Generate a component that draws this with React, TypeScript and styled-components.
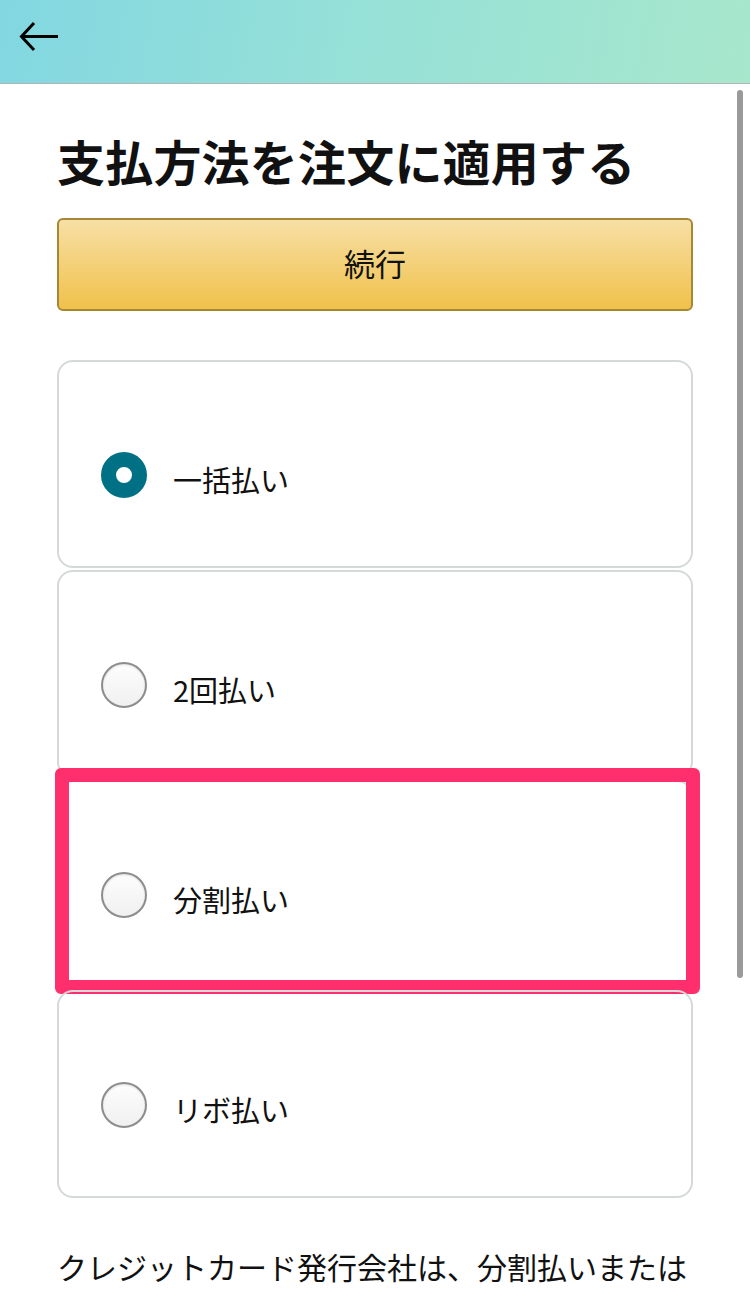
import React from "react";
import styled, { createGlobalStyle } from "styled-components";
import { useState, FC } from "react";

const Global = createGlobalStyle`
  html, body {
    margin: 0;
    padding: 0;
    background: #fff;
    overflow: hidden;
  }
  body {
    font-family: "Noto Sans CJK JP", "Noto Sans", sans-serif;
    color: #111;
  }
`;

const options = ["一括払い", "2回払い", "分割払い", "リボ払い"];

const App: FC = () => {
  const [selected, setSelected] = useState<number>(0);

  return (
    <Page>
      <Global />
      <Header>
        <BackButton aria-label="戻る">
          <svg width="40" height="32" viewBox="0 0 40 32" fill="none">
            <path d="M39 15.5H4" stroke="#000" strokeWidth="3" />
            <path d="M15 2L2.5 15.5L15 29" stroke="#000" strokeWidth="3" />
          </svg>
        </BackButton>
      </Header>
      <Content>
        <Title>支払方法を注文に適用する</Title>
        <ContinueButton>続行</ContinueButton>
        <OptionList>
          {options.map((label, i) => (
            <Option key={label} onClick={() => setSelected(i)}>
              <Radio checked={selected === i} />
              <OptionLabel>{label}</OptionLabel>
              {i === 2 && <Highlight />}
            </Option>
          ))}
        </OptionList>
        <Note>クレジットカード発行会社は、分割払いまたは</Note>
      </Content>
      <ScrollThumb />
    </Page>
  );
};

const Page = styled.div`
  position: relative;
  width: 750px;
  height: 1289px;
  overflow: hidden;
`;

const Header = styled.header`
  height: 83px;
  background: linear-gradient(100deg, #82d7e1 0%, #95e0d8 45%, #a7e7cc 100%);
  border-bottom: 1px solid #b3b3b3;
  display: flex;
  align-items: flex-start;
`;

const BackButton = styled.button`
  border: none;
  background: transparent;
  padding: 0;
  margin: 21px 0 0 19px;
  display: flex;
  cursor: pointer;
`;

const Content = styled.main`
  padding: 0 57px;
  display: flex;
  flex-direction: column;
`;

const Title = styled.h1`
  margin: 46px 0 0;
  font-size: 48px;
  font-weight: 700;
  line-height: 60px;
  letter-spacing: 0.2px;
  color: #111;
`;

const ContinueButton = styled.button`
  margin-top: 28px;
  height: 93px;
  width: 100%;
  border: 2px solid #a88734;
  border-radius: 6px;
  background: linear-gradient(to bottom, #f7dfa5, #f0c14b);
  font-family: "Noto Sans CJK JP", sans-serif;
  font-size: 31px;
  line-height: 1;
  padding: 0 0 4px;
  color: #111;
  cursor: pointer;
`;

const OptionList = styled.div`
  margin-top: 49px;
  display: flex;
  flex-direction: column;
  gap: 2px;
`;

const Option = styled.label`
  position: relative;
  box-sizing: border-box;
  height: 208px;
  border: 2px solid #d5d9d9;
  border-radius: 16px;
  display: flex;
  align-items: center;
  padding: 22px 0 0 42px;
  cursor: pointer;
`;

const Radio = styled.span<{ checked: boolean }>`
  box-sizing: border-box;
  width: 46px;
  height: 46px;
  border-radius: 50%;
  flex-shrink: 0;
  background: ${(p) => (p.checked ? "#fff" : "linear-gradient(#fdfdfd, #f0f0f0)")};
  border: ${(p) => (p.checked ? "15px solid #007185" : "2px solid #8d8d8d")};
  box-shadow: ${(p) => (p.checked ? "none" : "inset 0 1px 2px rgba(0,0,0,0.12)")};
`;

const OptionLabel = styled.span`
  margin: 8px 0 0 26px;
  font-size: 29px;
  color: #111;
`;

const Highlight = styled.span`
  position: absolute;
  top: -14px;
  left: -4px;
  right: -9px;
  bottom: -8px;
  border: 14px solid #ff2f6d;
  border-radius: 6px;
  pointer-events: none;
`;

const Note = styled.p`
  margin: 44px 0 0;
  font-size: 30px;
  line-height: 48px;
  color: #111;
  white-space: nowrap;
`;

const ScrollThumb = styled.div`
  position: absolute;
  top: 90px;
  right: 7px;
  width: 6px;
  height: 888px;
  border-radius: 3px;
  background: #9a9a9a;
`;

export default App;
